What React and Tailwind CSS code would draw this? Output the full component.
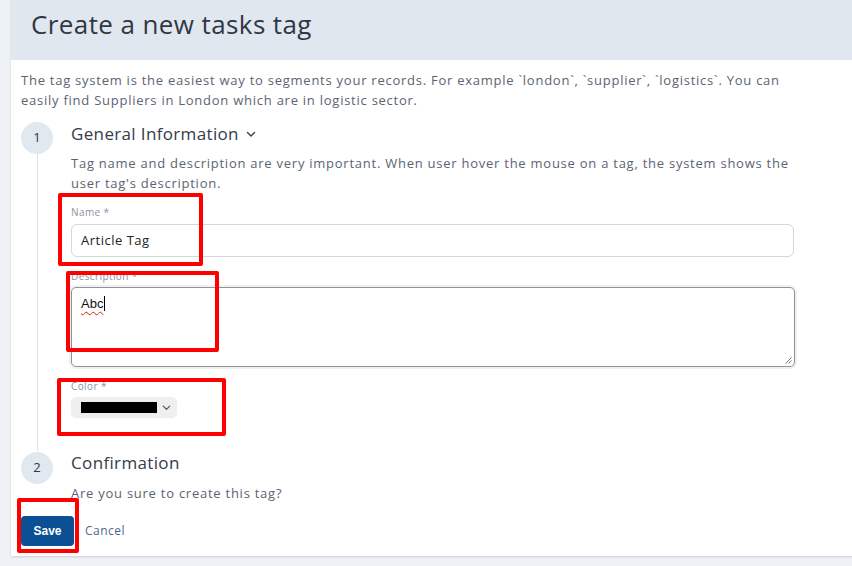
import React from "react";

const FONT = { fontFamily: "'Open Sans', 'Noto Sans', sans-serif" };

function StepCircle({ n }) {
  return (
    <div className="flex h-[32px] w-[32px] shrink-0 items-center justify-center rounded-full bg-[#e2e8f0] text-[13px] text-[#2d3748]">
      {n}
    </div>
  );
}

function Chevron({ className }) {
  return (
    <svg viewBox="0 0 12 12" className={className} fill="none" stroke="currentColor" strokeWidth="1.4" strokeLinecap="round" strokeLinejoin="round">
      <path d="M2.5 4.5 6 8l3.5-3.5" />
    </svg>
  );
}

function Mark({ className }) {
  return <div className={"pointer-events-none absolute rounded-[2px] border-[4px] border-[#ff0000] " + className} />;
}

export default function App() {
  return (
    <div className="relative min-h-[566px] overflow-hidden bg-[#eef2f7] pl-[11px] pb-[11px]" style={FONT}>
      <div className="w-[860px] bg-white shadow-[0_1px_2px_rgba(0,0,0,0.15)]">
        <div className="flex h-[60px] items-center bg-[#e1e7ef] pl-[20px] pb-[12px]">
          <h1 className="text-[26px] tracking-[0.4px] text-[#2f3747]">Create a new tasks tag</h1>
        </div>

        <div className="px-[10px] pt-[10px] pb-[10px]">
          <p className="whitespace-nowrap text-[13px] leading-[20px] tracking-[0.75px] text-[#5b6473]">
            The tag system is the easiest way to segments your records. For example `london`, `supplier`, `logistics`. You can
            <br />
            easily find Suppliers in London which are in logistic sector.
          </p>

          {/* step 1 */}
          <div className="mt-[12px] flex gap-[18px]">
            <div className="flex flex-col items-center">
              <StepCircle n="1" />
              <div className="w-px flex-1 bg-[#dde2e8]" />
            </div>
            <div className="flex-1 pb-[33px]">
              <div className="flex h-[24px] items-center gap-[6px] text-[17px] tracking-[0.35px] text-[#343b4b]">
                General Information
                <Chevron className="h-[12px] w-[12px] text-[#343b4b]" />
              </div>
              <p className="mt-[7px] whitespace-nowrap text-[13px] leading-[20px] tracking-[0.75px] text-[#5b6473]">
                Tag name and description are very important. When user hover the mouse on a tag, the system shows the
                <br />
                user tag's description.
              </p>

              <div className="mt-[12px] h-[14px] text-[10px] leading-[14px] tracking-[0.4px] text-[#8b94a2]">Name *</div>
              <div className="mt-[5px] flex h-[33px] w-[723px] items-center rounded-[6px] border border-[#d4d7dc] px-[9px] text-[13px] tracking-[0.5px] text-[#222]">
                Article Tag
              </div>

              <div className="mt-[12px] h-[14px] text-[10px] leading-[14px] tracking-[0.4px] text-[#8b94a2]">Description *</div>
              <div className="mt-[2px] -ml-[2px] w-[728px] rounded-[7px] bg-[#f1f1f1] p-[2px]">
                <div className="relative h-[80px] rounded-[5px] border border-[#8f9399] bg-white px-[9px] pt-[2px]">
                  <span className="text-[13px] text-[#111] underline decoration-wavy decoration-[#e0201c] decoration-1 underline-offset-[3px]" style={{ fontFamily: "'Liberation Sans', Arial, sans-serif" }}>
                    Abc
                  </span>
                  <span className="ml-px inline-block h-[15px] w-px translate-y-[3px] bg-black" />
                  <svg viewBox="0 0 8 8" className="absolute bottom-[2px] right-[2px] h-[8px] w-[8px]" stroke="#777" strokeWidth="1">
                    <path d="M7.5 1.5 1.5 7.5M7.5 4.5 4.5 7.5" />
                  </svg>
                </div>
              </div>

              <div className="mt-[10px] h-[14px] text-[10px] leading-[14px] tracking-[0.4px] text-[#8b94a2]">Color *</div>
              <div className="mt-[4px] flex h-[21px] w-[106px] items-center rounded-[5px] bg-[#efefef] pl-[10px] pr-[5px]">
                <div className="h-[11px] w-[76px] bg-black" />
                <Chevron className="ml-auto h-[11px] w-[11px] text-[#555]" />
              </div>
            </div>
          </div>

          {/* step 2 */}
          <div className="flex gap-[18px]">
            <div className="pt-[1px]">
              <StepCircle n="2" />
            </div>
            <div className="flex-1">
              <div className="flex h-[24px] items-center text-[17px] tracking-[0.35px] text-[#343b4b]">Confirmation</div>
              <p className="mt-[8px] text-[13px] leading-[20px] tracking-[0.75px] text-[#5b6473]">Are you sure to create this tag?</p>
            </div>
          </div>

          <div className="mt-[13px] flex items-center gap-[11px]">
            <button className="h-[30px] w-[53px] rounded-[4px] bg-[#0b4f95] text-[12px] font-bold text-white" style={{ fontFamily: "'Liberation Sans', Arial, sans-serif" }}>
              Save
            </button>
            <span className="text-[12px] tracking-[0.5px] text-[#4c6a8c]">Cancel</span>
          </div>
        </div>
      </div>

      <Mark className="left-[58px] top-[193px] h-[73px] w-[145px]" />
      <Mark className="left-[66px] top-[271px] h-[81px] w-[153px]" />
      <Mark className="left-[57px] top-[378px] h-[58px] w-[169px]" />
      <Mark className="left-[17px] top-[498px] h-[55px] w-[62px]" />
    </div>
  );
}
